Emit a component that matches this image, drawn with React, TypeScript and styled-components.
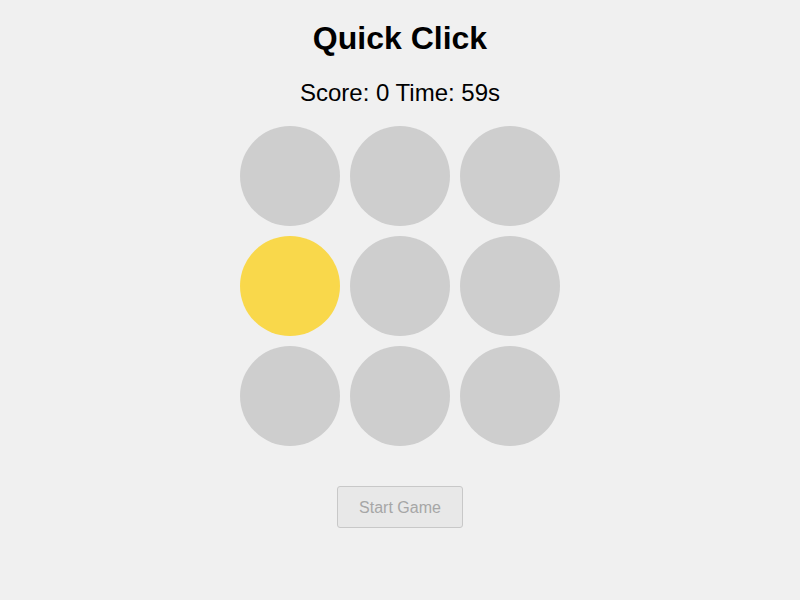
import React, { useState } from 'react'
import styled, { createGlobalStyle } from 'styled-components'

const GlobalStyle = createGlobalStyle`
    body {
        margin: 0;
        background-color: #f0f0f0;
        font-family: "Liberation Sans", Arial, sans-serif;
    }
`

export default function App() {
    const [active] = useState(3)
    const [score] = useState(0)
    const [time] = useState(59)

    return (
        <StyledGame>
            <GlobalStyle />
            <h1 className='title'>Quick Click</h1>
            <p className='info'>Score: {score} Time: {time}s</p>
            <Board>
                {Array.from({ length: 9 }).map((_, i) => (
                    <Hole key={i} $active={i === active} />
                ))}
            </Board>
            <StartButton disabled>Start Game</StartButton>
        </StyledGame>
    )
}

const StyledGame = styled.div`
    display: flex;
    flex-direction: column;
    align-items: center;
    padding-top: 20px;
    .title{
        margin: 0;
        font-size: 32px;
        font-weight: bold;
        line-height: 37px;
        color: #000;
    }
    .info{
        margin: 22px 0 0 0;
        font-size: 24px;
        line-height: 28px;
        color: #000;
    }
`

const Board = styled.div`
    margin-top: 19px;
    display: grid;
    grid-template-columns: repeat(3, 100px);
    gap: 10px;
`

const Hole = styled.div<{ $active: boolean }>`
    width: 100px;
    height: 100px;
    border-radius: 50%;
    background-color: ${(p) => (p.$active ? '#f9d84b' : '#cecece')};
`

const StartButton = styled.button`
    margin-top: 40px;
    width: 126px;
    height: 42px;
    padding: 2px 0 0 0;
    font-family: "Liberation Sans", Arial, sans-serif;
    font-size: 16px;
    color: #a6a6a6;
    background-color: #e8e8e8;
    border: 1px solid #c8c8c8;
    border-radius: 3px;
`
